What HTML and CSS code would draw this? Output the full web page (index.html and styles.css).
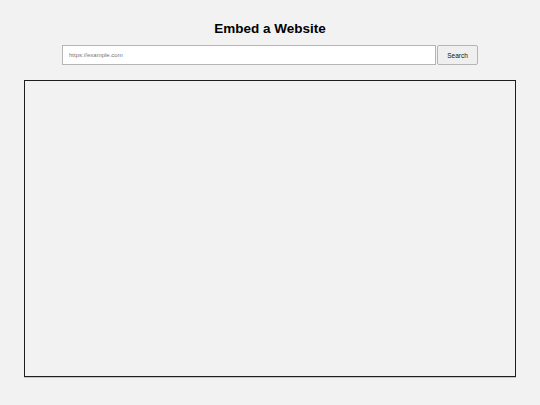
FILE: index.html
```html
<!DOCTYPE html>
<html>
<head>
<meta charset="utf-8">
<link rel="stylesheet" href="styles.css">
</head>
<body>
<div class="page">
  <h1 class="title">Embed a Website</h1>
  <form class="search">
    <input class="url" type="text" placeholder="https://example.com">
    <button class="btn" type="button">Search</button>
  </form>
  <div class="frame"></div>
</div>
</body>
</html>
```
FILE: styles.css
```css
html, body {
  margin: 0;
  padding: 0;
  background: #f2f2f2;
  font-family: "Liberation Sans", Arial, sans-serif;
}
.page {
  width: 540px;
  height: 405px;
  box-sizing: border-box;
  padding: 21px 24px 0;
  display: flex;
  flex-direction: column;
  align-items: center;
}
.title {
  margin: 0;
  font-size: 13.5px;
  font-weight: bold;
  color: #000;
  line-height: 16px;
}
.search {
  margin: 8px 0 0;
  display: flex;
  gap: 1px;
}
.url {
  width: 374px;
  height: 20px;
  box-sizing: border-box;
  border: 1px solid #b5b5b5;
  background: #fff;
  padding: 0 6px;
  font-family: "Liberation Sans", Arial, sans-serif;
  font-size: 6px;
  color: #333;
  outline: none;
}
.url::placeholder {
  color: #777;
}
.btn {
  width: 41px;
  height: 20px;
  box-sizing: border-box;
  border: 1px solid #b5b5b5;
  border-radius: 2px;
  background: #efefef;
  font-family: "Liberation Sans", Arial, sans-serif;
  font-size: 6.5px;
  color: #111;
  padding: 0;
}
.frame {
  margin-top: 15px;
  width: 492px;
  height: 297px;
  box-sizing: border-box;
  border: 1px solid #1e1e1e;
  box-shadow: 0 1px 0 #c4c4c4;
}
```
